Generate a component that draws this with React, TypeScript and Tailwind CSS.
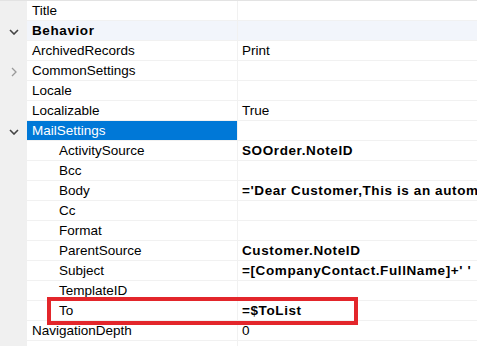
type Row = {
  name: string;
  value?: string;
  level?: 0 | 1;
  bold?: boolean;
  toggle?: 'open' | 'closed';
  category?: boolean;
  selected?: boolean;
};

const ROWS: Row[] = [
  { name: 'Title' },
  { name: 'Behavior', toggle: 'open', category: true },
  { name: 'ArchivedRecords', value: 'Print' },
  { name: 'CommonSettings', toggle: 'closed' },
  { name: 'Locale' },
  { name: 'Localizable', value: 'True' },
  { name: 'MailSettings', toggle: 'open', selected: true },
  { name: 'ActivitySource', value: 'SOOrder.NoteID', level: 1, bold: true },
  { name: 'Bcc', level: 1 },
  { name: 'Body', value: "='Dear Customer,This is an automated message", level: 1, bold: true },
  { name: 'Cc', level: 1 },
  { name: 'Format', level: 1 },
  { name: 'ParentSource', value: 'Customer.NoteID', level: 1, bold: true },
  { name: 'Subject', value: "=[CompanyContact.FullName]+' '", level: 1, bold: true },
  { name: 'TemplateID', level: 1 },
  { name: 'To', value: '=$ToList', level: 1, bold: true },
  { name: 'NavigationDepth', value: '0' },
  { name: 'NavigationTarget', value: 'True' },
];

function Toggle({ kind }: { kind: 'open' | 'closed' }) {
  if (kind === 'open') {
    return (
      <svg width="10" height="6" viewBox="0 0 10 6" className="text-[#444]">
        <polyline points="1,1 5,5 9,1" fill="none" stroke="currentColor" strokeWidth="1.6" />
      </svg>
    );
  }
  return (
    <svg width="6" height="10" viewBox="0 0 6 10" className="text-[#999]">
      <polyline points="1,1 5,5 1,9" fill="none" stroke="currentColor" strokeWidth="1.3" />
    </svg>
  );
}

export default function App() {
  return (
    <div className="relative w-[477px] h-[346px] overflow-hidden bg-white border-t border-[#e3e3e3] font-['Segoe_UI','Liberation_Sans',Arial,sans-serif] text-[13.5px] text-black">
      <div className="flex h-full">
        <div className="flex-1 flex flex-col">
          {ROWS.map(row => (
            <div key={row.name} className="flex h-[20px] shrink-0">
              <div className="w-[27px] bg-[#f0f0f0] flex items-center justify-center pl-[1px] pt-[2px]">
                {row.toggle && <Toggle kind={row.toggle} />}
              </div>
              <div
                className={`w-[210px] flex items-center pt-[2px] whitespace-nowrap overflow-hidden border-b border-[#f1f1f1] ${
                  row.level === 1 ? 'pl-[32px]' : 'pl-[5px]'
                } ${row.selected ? 'bg-[#0078d7] text-white' : row.category ? 'bg-[#f2f5fb] font-bold tracking-[0.6px]' : ''}`}
              >
                {row.name}
              </div>
              <div
                className={`flex-1 flex items-center pt-[2px] pl-[4px] whitespace-nowrap overflow-hidden border-l border-b border-[#f1f1f1] ${
                  row.category ? 'bg-[#f2f5fb]' : ''
                } ${row.bold ? 'font-bold tracking-[0.6px]' : ''}`}
              >
                {row.value}
              </div>
            </div>
          ))}
        </div>
        <div className="w-[5px] bg-[#f0f0f0]" />
      </div>
      <div className="absolute left-[47px] top-[296px] w-[311px] h-[28px] border-[4px] border-[#e3262b]" />
    </div>
  );
}
